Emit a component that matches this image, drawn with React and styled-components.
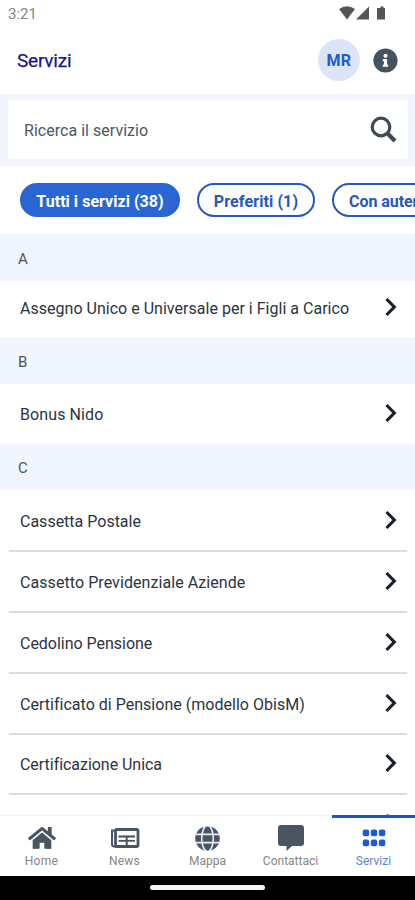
import React from "react";
import styled, { createGlobalStyle } from "styled-components";
import { FaHome, FaInfoCircle } from "react-icons/fa";

const GlobalStyle = createGlobalStyle`
  * { box-sizing: border-box; }
  body { margin: 0; background: #fff; }
`;

const Screen = styled.div`
  width: 415px;
  height: 900px;
  overflow: hidden;
  display: flex;
  flex-direction: column;
  background: #fff;
  color: #2b3440;
  font-family: Roboto, "Noto Sans", sans-serif;
`;

const StatusBar = styled.div`
  height: 28px;
  flex: none;
  display: flex;
  justify-content: space-between;
  padding: 6px 28px 0 8px;
  font-size: 15px;
  line-height: 17px;
  letter-spacing: 0;
  color: #858585;
`;

const StatusIcons = styled.svg`
  width: 48px;
  height: 15px;
  fill: #555;
`;

const Header = styled.header`
  height: 66px;
  flex: none;
  display: flex;
  align-items: center;
  padding: 0 17px;
`;

const Title = styled.h1`
  flex: 1;
  margin: -2px 0 0;
  font-size: 19px;
  font-weight: 400;
  letter-spacing: -0.2px;
  color: #17178c;
  -webkit-text-stroke: 0.25px #17178c;
`;

const Avatar = styled.div`
  width: 42px;
  height: 42px;
  margin: -2px 13px 0 0;
  border-radius: 50%;
  background: #dbe4f9;
  color: #1d5bd3;
  font-size: 16px;
  font-weight: 700;
  letter-spacing: 0.3px;
  display: flex;
  align-items: center;
  justify-content: center;
`;

const InfoIcon = styled(FaInfoCircle)`
  width: 25px;
  height: 25px;
  margin-top: -2px;
  color: #46525f;
`;

const SearchBand = styled.div`
  height: 72px;
  flex: none;
  padding: 6px 7px 7px 8px;
  background: #f2f5fd;
`;

const SearchBox = styled.div`
  height: 59px;
  display: flex;
  align-items: center;
  justify-content: space-between;
  padding: 0 11px 0 16px;
  background: #fff;
  font-size: 16px;
  color: #4d5763;
`;

const SearchText = styled.span`
  letter-spacing: 0.03px;
  padding-top: 2px;
`;

const Chips = styled.div`
  height: 68px;
  flex: none;
  display: flex;
  gap: 17px;
  padding: 17px 0 0 20px;
  overflow: hidden;
`;

const Chip = styled.div`
  width: ${(p) => p.$w}px;
  height: 34px;
  flex: none;
  display: flex;
  align-items: center;
  justify-content: ${(p) => (p.$start ? "flex-start" : "center")};
  padding: 2px ${(p) => (p.$start ? 15 : 0)}px 0;
  border: 2px solid #2758be;
  border-color: ${(p) => (p.$active ? "#2966d4" : "#2758be")};
  border-radius: 17px;
  background: ${(p) => (p.$active ? "#2966d4" : "#fff")};
  color: ${(p) => (p.$active ? "#fff" : "#2758be")};
  font-size: 16px;
  font-weight: 700;
  white-space: nowrap;
  letter-spacing: ${(p) => p.$ls}px;
`;

const List = styled.div`
  flex: 1;
  min-height: 0;
  overflow: hidden;
`;

const SectionTitle = styled.div`
  height: ${(p) => p.$h}px;
  display: flex;
  align-items: center;
  padding: 2px 18px 0;
  background: #f1f5fd;
  font-size: 15px;
  color: #4c5661;
`;

const Row = styled.div`
  height: ${(p) => p.$h}px;
  margin: 0 8px 0 9px;
  padding: 0 10px ${(p) => p.$pb || 0}px 11px;
  display: flex;
  align-items: center;
  justify-content: space-between;
  border-bottom: ${(p) => (p.$line ? "2px solid #dcdddf" : "none")};
`;

const RowText = styled.span`
  padding-top: 3px;
  font-size: 16px;
  white-space: nowrap;
  letter-spacing: ${(p) => p.$ls}px;
`;

const ChevronSvg = styled.svg`
  width: 13px;
  height: 20px;
  flex: none;
  fill: none;
  stroke: #18212d;
  stroke-width: 3.2;
`;

const Nav = styled.nav`
  height: 61px;
  flex: none;
  display: grid;
  grid-template-columns: repeat(5, 1fr);
  background: #fff;
`;

const Tab = styled.div`
  display: flex;
  flex-direction: column;
  align-items: center;
  border-top: ${(p) => (p.$active ? "3px solid #1d54c4" : "1px solid #f1f2f3")};
  padding-top: ${(p) => (p.$active ? 5 : 7)}px;
  color: ${(p) => (p.$active ? "#1d5bd3" : "#495662")};
  svg { flex: none; }
`;

const TabLabel = styled.span`
  margin-top: 1px;
  font-size: 12px;
  line-height: 14px;
  letter-spacing: ${(p) => p.$ls}px;
  color: ${(p) => (p.$active ? "#5b84e4" : "#858585")};
`;

const TabIcon = styled.div`
  height: 30px;
  display: flex;
  align-items: center;
`;

const GestureBar = styled.div`
  height: 24px;
  flex: none;
  display: flex;
  justify-content: center;
  padding-top: 9px;
  background: #000;
`;

const Handle = styled.div`
  width: 115px;
  height: 5px;
  border-radius: 3px;
  background: #f4f4f4;
`;

const Chevron = () => (
  <ChevronSvg viewBox="0 0 13 20">
    <path d="M2.5 2L10.3 10L2.5 18" />
  </ChevronSvg>
);

const SearchIcon = () => (
  <svg width="27" height="27" viewBox="0 0 27 27" fill="none" stroke="#3d4a58">
    <circle cx="11" cy="11" r="8.8" strokeWidth="3.2" />
    <path d="M17.3 17.3L25 25" strokeWidth="4.2" />
  </svg>
);

const NewsIcon = () => (
  <svg width="30" height="20" viewBox="0 0 30 20" fill="none" stroke="currentColor">
    <rect x="5.5" y="1.5" width="22.5" height="17" rx="1.5" strokeWidth="2.8" />
    <path d="M5 2.5H2V16Q2 18.5 4 18.5H7" strokeWidth="2" />
    <path d="M8.5 8.5H25" strokeWidth="2.2" />
    <path d="M8.5 12.8H25" strokeWidth="1.8" />
    <path d="M16.7 8.5V17" strokeWidth="2" />
  </svg>
);

const GlobeIcon = () => (
  <svg width="25" height="25" viewBox="0 0 25 25" fill="none" stroke="#e7eff8" strokeWidth="1.6">
    <circle cx="12.5" cy="12.5" r="12.3" fill="currentColor" stroke="none" />
    <path d="M0 8.4H25M0 16.6H25" />
    <ellipse cx="12.5" cy="12.5" rx="5.8" ry="13" />
  </svg>
);

const ChatIcon = () => (
  <svg width="26" height="26" viewBox="0 0 26 26" fill="currentColor">
    <path d="M3 0H23Q26 0 26 3V18Q26 21 23 21H14L8.5 26V21H3Q0 21 0 18V3Q0 0 3 0Z" />
  </svg>
);

const GridIcon = () => (
  <svg width="24" height="18" viewBox="0 0 24 18" fill="currentColor">
    {[0.7, 8.8, 16.9].map((x) =>
      [0.5, 10.5].map((y) => <rect key={`${x}-${y}`} x={x} y={y} width="6.4" height="6.8" rx="2" />)
    )}
  </svg>
);

const sections = [
  { letter: "A", h: 47, rows: [{ t: "Assegno Unico e Universale per i Figli a Carico", h: 57, pb: 6, ls: 0.02 }] },
  { letter: "B", h: 46, rows: [{ t: "Bonus Nido", h: 60, pb: 2, ls: 0.1 }] },
  {
    letter: "C",
    h: 46,
    rows: [
      { t: "Cassetta Postale", h: 62, ls: 0, line: true },
      { t: "Cassetto Previdenziale Aziende", h: 61, pb: 1, ls: 0.07, line: true },
      { t: "Cedolino Pensione", h: 61, pb: 2, ls: -0.02, line: true },
      { t: "Certificato di Pensione (modello ObisM)", h: 61, pb: 2, ls: 0.02, line: true },
      { t: "Certificazione Unica", h: 60, pb: 2, ls: -0.04, line: true },
      { t: "", h: 55, ls: 0 },
    ],
  },
];

const tabs = [
  { label: "Home", icon: <FaHome size={28} />, ls: 0.3 },
  { label: "News", icon: <NewsIcon />, ls: 0.2 },
  { label: "Mappa", icon: <GlobeIcon />, ls: 0 },
  { label: "Contattaci", icon: <ChatIcon />, ls: 0 },
  { label: "Servizi", icon: <GridIcon />, ls: 0, active: true },
];

export default function App() {
  return (
    <Screen>
      <GlobalStyle />
      <StatusBar>
        <span>3:21</span>
        <StatusIcons viewBox="0 0 48 15">
          <path d="M0 3Q8-2.5 16 3L8 13.5Z" />
          <path d="M30 0.5V13.5H17Z" />
          <path d="M40 2H41.5V0.5H44.5V2H46V13.5H38V2Z" />
        </StatusIcons>
      </StatusBar>
      <Header>
        <Title>Servizi</Title>
        <Avatar>MR</Avatar>
        <InfoIcon />
      </Header>
      <SearchBand>
        <SearchBox>
          <SearchText>Ricerca il servizio</SearchText>
          <SearchIcon />
        </SearchBox>
      </SearchBand>
      <Chips>
        <Chip $active $w={160} $ls={0.03}>Tutti i servizi (38)</Chip>
        <Chip $w={118} $ls={0.1}>Preferiti (1)</Chip>
        <Chip $w={182} $ls={-0.05} $start>Con autenticazione</Chip>
      </Chips>
      <List>
        {sections.map((s) => (
          <React.Fragment key={s.letter}>
            <SectionTitle $h={s.h}>{s.letter}</SectionTitle>
            {s.rows.map((r, i) => (
              <Row key={i} $h={r.h} $pb={r.pb} $line={r.line}>
                <RowText $ls={r.ls}>{r.t}</RowText>
                <Chevron />
              </Row>
            ))}
          </React.Fragment>
        ))}
      </List>
      <Nav>
        {tabs.map((t) => (
          <Tab key={t.label} $active={t.active}>
            <TabIcon>{t.icon}</TabIcon>
            <TabLabel $active={t.active} $ls={t.ls}>{t.label}</TabLabel>
          </Tab>
        ))}
      </Nav>
      <GestureBar>
        <Handle />
      </GestureBar>
    </Screen>
  );
}
